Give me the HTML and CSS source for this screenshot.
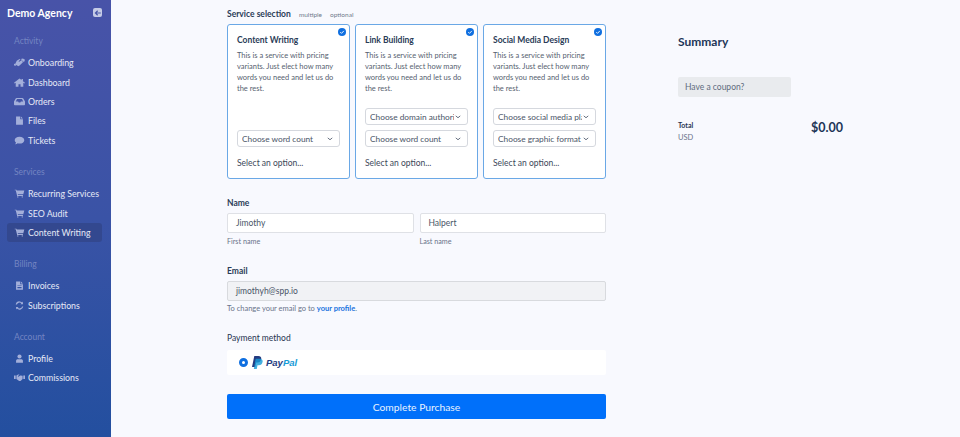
FILE: index.html
```html
<!DOCTYPE html>
<html lang="en">
  <head>
    <meta charset="UTF-8" />
    <title>Checkout</title>
    <link rel="stylesheet" href="styles.css">
  </head>
  <body>
    <aside class="sidebar">
      <div class="brand">
        <span>Demo Agency</span>
        <span class="collapse">
          <svg viewBox="0 0 10 10" width="8" height="8"><path d="M8.5 5H2M4.6 2.2 1.8 5l2.8 2.8" fill="none" stroke="#4a58a8" stroke-width="1.5"/></svg>
        </span>
      </div>

      <div class="nav-title">Activity</div>
      <a class="nav-item"><svg class="icon" viewBox="0 0 16 12"><path d="M0 7.500 3 9.500 1.800 11 0 10zM4 3.500 8 1l1.500.5L6.500 4l1 1 4-2.500 1.500 3-4.500 4.500-2 1.500-2-1-3-2zM10 1l3-1 3 2-1.500 3.500z"/></svg>Onboarding</a>
      <a class="nav-item"><svg class="icon" viewBox="0 0 16 12"><path d="M8 0 0 6.500l1 1 1.500-1.200V12h4V8.500h3V12h4V6.300L15 7.500l1-1-3-2.400V1h-2v1.500z"/></svg>Dashboard</a>
      <a class="nav-item"><svg class="icon" viewBox="0 0 16 12"><path fill-rule="evenodd" d="M4 1h8c1 0 1.500.5 2 1.200L16 6v4c0 1-.7 1.500-1.500 1.500h-13C.7 11.500 0 11 0 10V6l2-3.800C2.500 1.500 3 1 4 1zm.4 1.500L2.600 6H6l.8 1.500h2.400L10 6h3.400l-1.800-3.500z"/></svg>Orders</a>
      <a class="nav-item"><svg class="icon" viewBox="0 0 16 12"><path d="M3 0h6v4h4v8H3zM10 0l3 3h-3z"/></svg>Files</a>
      <a class="nav-item"><svg class="icon" viewBox="0 0 16 12"><path d="M8 .5c4 0 7 2.300 7 5s-3 5-7 5c-1 0-1.800-.1-2.600-.4C4.400 11 3 11.600 1.500 11.500c.8-.8 1.300-1.700 1.400-2.600C1.700 8 1 6.800 1 5.500c0-2.700 3-5 7-5z"/></svg>Tickets</a>

      <div class="nav-title nav-title-next">Services</div>
      <a class="nav-item"><svg class="icon" viewBox="0 0 16 12"><use href="#cart"/></svg>Recurring Services</a>
      <a class="nav-item"><svg class="icon" viewBox="0 0 16 12"><use href="#cart"/></svg>SEO Audit</a>
      <a class="nav-item nav-item-active"><svg class="icon" viewBox="0 0 16 12"><use href="#cart"/></svg>Content Writing</a>

      <div class="nav-title nav-title-next">Billing</div>
      <a class="nav-item"><svg class="icon" viewBox="0 0 16 12"><path fill-rule="evenodd" d="M3 0h6v4h4v8H3zM10 0l3 3h-3zM5 5.500v1h6v-1zM5 8v2h6V8z"/></svg>Invoices</a>
      <a class="nav-item"><svg class="icon" viewBox="0 0 16 12"><path d="M8 0c1.500 0 2.800.6 3.800 1.500L13 .3V4H9.300l1.300-1.300A4 4 0 0 0 4.200 4.500H2.500A5.600 5.600 0 0 1 8 0zM13.500 7.500A5.600 5.600 0 0 1 4.200 10.500L3 11.700V8h3.700L5.400 9.300a4 4 0 0 0 6.400-1.800z"/></svg>Subscriptions</a>

      <div class="nav-title nav-title-next">Account</div>
      <a class="nav-item"><svg class="icon" viewBox="0 0 16 12"><circle cx="8" cy="3" r="3"/><path d="M3 12V9.500C3 8 4 7 5.500 7h5C12 7 13 8 13 9.500V12z"/></svg>Profile</a>
      <a class="nav-item"><svg class="icon" viewBox="0 0 16 12"><path d="M0 3h2.500v5H0zM13.500 3H16v5h-2.500zM3.500 3 6 1.500h2L5.500 4l1 1L9 3l3.500.5V8L9.500 11H7.500L3.500 8z"/></svg>Commissions</a>

      <svg class="defs" width="0" height="0">
        <symbol id="cart" viewBox="0 0 16 12"><path d="M1 0h2.500l.4 1.500H15l-1.500 5.500H5.500l.3 1.200H13v1.300H4.600L2.500 1.300H1z"/><circle cx="5.500" cy="11" r="1"/><circle cx="12" cy="11" r="1"/></symbol>
      </svg>
    </aside>

    <main class="content">
      <form class="checkout">
        <div class="field-label service-label">
          Service selection <small>multiple</small> <small>optional</small>
        </div>
        <div class="services">
          <div class="service">
            <svg class="check" viewBox="0 0 10 10"><circle cx="5" cy="5" r="5" fill="#0f6fe0"/><path d="M2.800 5.100 4.400 6.700 7.300 3.600" fill="none" stroke="#fff" stroke-width="1.100"/></svg>
            <h3>Content Writing</h3>
            <p>This is a service with pricing variants. Just elect how many words you need and let us do the rest.</p>
            <div class="select"><span>Choose word count</span><svg viewBox="0 0 8 5"><path d="M1 1l3 2.500L7 1" fill="none" stroke="#4a5568" stroke-width="1.100"/></svg></div>
            <div class="price">Select an option...</div>
          </div>
          <div class="service">
            <svg class="check" viewBox="0 0 10 10"><circle cx="5" cy="5" r="5" fill="#0f6fe0"/><path d="M2.800 5.100 4.400 6.700 7.300 3.600" fill="none" stroke="#fff" stroke-width="1.100"/></svg>
            <h3>Link Building</h3>
            <p>This is a service with pricing variants. Just elect how many words you need and let us do the rest.</p>
            <div class="select"><span>Choose domain authority</span><svg viewBox="0 0 8 5"><path d="M1 1l3 2.500L7 1" fill="none" stroke="#4a5568" stroke-width="1.100"/></svg></div>
            <div class="select"><span>Choose word count</span><svg viewBox="0 0 8 5"><path d="M1 1l3 2.500L7 1" fill="none" stroke="#4a5568" stroke-width="1.100"/></svg></div>
            <div class="price">Select an option...</div>
          </div>
          <div class="service">
            <svg class="check" viewBox="0 0 10 10"><circle cx="5" cy="5" r="5" fill="#0f6fe0"/><path d="M2.800 5.100 4.400 6.700 7.300 3.600" fill="none" stroke="#fff" stroke-width="1.100"/></svg>
            <h3>Social Media Design</h3>
            <p>This is a service with pricing variants. Just elect how many words you need and let us do the rest.</p>
            <div class="select"><span>Choose social media platform</span><svg viewBox="0 0 8 5"><path d="M1 1l3 2.500L7 1" fill="none" stroke="#4a5568" stroke-width="1.100"/></svg></div>
            <div class="select"><span>Choose graphic format</span><svg viewBox="0 0 8 5"><path d="M1 1l3 2.500L7 1" fill="none" stroke="#4a5568" stroke-width="1.100"/></svg></div>
            <div class="price">Select an option...</div>
          </div>
        </div>

        <div class="field-label name-label">Name</div>
        <div class="name-row">
          <div class="name-col">
            <div class="input">Jimothy</div>
            <div class="hint">First name</div>
          </div>
          <div class="name-col">
            <div class="input">Halpert</div>
            <div class="hint">Last name</div>
          </div>
        </div>

        <div class="field-label email-label">Email</div>
        <div class="input input-disabled">jimothyh@spp.io</div>
        <div class="hint hint-email">To change your email go to <a class="link">your profile</a>.</div>

        <div class="field-label payment-label">Payment method</div>
        <div class="payment">
          <span class="radio"></span>
          <svg class="pp-mark" viewBox="0 0 12 14" width="11" height="13"><path d="M2.500 0H7c2.500 0 3.500 1.500 3 3.500C9.500 6 8 7 6 7H4.500L3.500 12H0z" fill="#253b80"/><path d="M4 3h4.500c2.500 0 3.500 1.500 3 3.500C11 9 9.500 10 7.500 10H6l-.8 4H2z" fill="#179bd7" opacity=".8"/></svg>
          <span class="pp-word"><b>Pay</b><i>Pal</i></span>
        </div>

        <button class="submit" type="button">Complete Purchase</button>
      </form>

      <section class="summary">
        <h2>Summary</h2>
        <div class="coupon">Have a coupon?</div>
        <div class="total">
          <div>
            <div class="total-label">Total</div>
            <div class="total-currency">USD</div>
          </div>
          <div class="total-amount">$0.00</div>
        </div>
      </section>
    </main>
  </body>
</html>
```

FILE: styles.css
```css
html,
body {
  height: 100%;
}
body {
  margin: 0;
  height: 437px;
  overflow: hidden;
  display: flex;
  font-family: "Lato", "Open Sans", sans-serif;
  background-color: #f8f9fe;
  color: #1f3350;
}
.sidebar {
  width: 111px;
  flex-shrink: 0;
  box-sizing: border-box;
  padding: 6px 9px 0 7px;
  background: linear-gradient(180deg, #4853a8 0%, #3a53a6 50%, #234f9f 100%);
  color: #fff;
}
.brand {
  display: flex;
  justify-content: space-between;
  align-items: center;
  font-size: 10.500px;
  font-weight: 700;
  height: 13px;
}
.collapse {
  width: 9px;
  height: 9px;
  background-color: #c5cbe6;
  border-radius: 2px;
  display: flex;
  align-items: center;
  justify-content: center;
}
.nav-title {
  font-size: 8.500px;
  color: #7485c2;
  margin: 16px 0 6px 7px;
  height: 12px;
  line-height: 12px;
}
.nav-title-next {
  margin-top: 16px;
}
.nav-item {
  display: flex;
  align-items: center;
  height: 19.400px;
  font-size: 8.800px;
  color: #e6e9f6;
  padding-left: 7px;
  border-radius: 3px;
}
.nav-item-active {
  background-color: #33488f;
  margin-top: 0;
}
.icon {
  width: 11px;
  height: 9px;
  margin-right: 3px;
  fill: #a3afda;
  flex-shrink: 0;
}
.defs {
  position: absolute;
}
.content {
  flex: 1;
  display: flex;
  padding-left: 116px;
}
.checkout {
  width: 379px;
  flex-shrink: 0;
  padding-top: 8px;
}
.field-label {
  font-size: 8.500px;
  font-weight: 700;
  color: #2a3c57;
  line-height: 12px;
}
.field-label small {
  font-size: 6.500px;
  font-weight: 400;
  color: #6f7a8c;
  margin-left: 6px;
}
.service-label {
  margin-bottom: 3px;
}
.services {
  display: flex;
  gap: 5px;
}
.service {
  position: relative;
  width: 123px;
  height: 155px;
  box-sizing: border-box;
  padding: 9px 9px 0;
  display: flex;
  flex-direction: column;
  background-color: #fff;
  border: 1px solid #6aa8e6;
  border-radius: 3px;
}
.service h3 {
  margin: 0;
  font-size: 8.500px;
  line-height: 12px;
  color: #2a3c57;
}
.service p {
  flex: 1;
  margin: 4px 0 0;
  font-size: 7.500px;
  line-height: 11px;
  color: #565f70;
}
.check {
  position: absolute;
  top: 3px;
  right: 3px;
  width: 8px;
  height: 8px;
}
.select {
  display: flex;
  align-items: center;
  gap: 1px;
  height: 17px;
  box-sizing: border-box;
  padding: 0 6px 0 4px;
  margin-top: 5px;
  border: 1px solid #d5d8de;
  border-radius: 3px;
  font-size: 8.300px;
  color: #4a5568;
}
.select span {
  flex: 1;
  overflow: hidden;
  white-space: nowrap;
}
.select svg {
  width: 6px;
  height: 4px;
  flex-shrink: 0;
}
.price {
  font-size: 8.500px;
  color: #3c4759;
  line-height: 12px;
  margin-top: 10px;
  margin-bottom: 9px;
}
.name-label {
  margin-top: 18px;
  margin-bottom: 4px;
}
.name-row {
  display: flex;
  gap: 6px;
}
.name-col {
  flex: 1;
}
.input {
  height: 20px;
  box-sizing: border-box;
  padding-left: 8px;
  display: flex;
  align-items: center;
  background-color: #fff;
  border: 1px solid #dfe1e6;
  border-radius: 2px;
  font-size: 8.500px;
  color: #4a5568;
}
.input-disabled {
  background-color: #f1f2f5;
  border-color: #d8dade;
}
.hint {
  font-size: 7.200px;
  line-height: 10px;
  color: #69738a;
  margin-top: 4px;
}
.hint-email {
  margin-top: 3px;
  font-size: 7.500px;
}
.link {
  color: #1873e0;
  font-weight: 700;
}
.email-label {
  margin-top: 18px;
  margin-bottom: 4px;
}
.payment-label {
  margin-top: 18px;
  margin-bottom: 6px;
  font-weight: 400;
  color: #1f3350;
}
.payment {
  height: 25px;
  display: flex;
  align-items: center;
  padding-left: 12px;
  background-color: #fff;
  border-radius: 2px;
}
.radio {
  width: 3px;
  height: 3px;
  border: 3.500px solid #0f6fe0;
  border-radius: 50%;
  background-color: #fff;
  margin-right: 4px;
}
.pp-mark {
  margin-right: 3px;
}
.pp-word {
  font-family: "Liberation Sans", sans-serif;
  font-size: 9.500px;
  font-weight: 700;
  font-style: italic;
}
.pp-word b {
  color: #253b80;
}
.pp-word i {
  color: #179bd7;
}
.submit {
  display: block;
  width: 100%;
  height: 25px;
  margin-top: 19px;
  border: none;
  border-radius: 2px;
  background-color: #0070fa;
  color: #e8f2ff;
  font-family: inherit;
  font-size: 10.300px;
}
.summary {
  width: 165px;
  margin-left: 72px;
  padding-top: 34px;
}
.summary h2 {
  margin: 0;
  font-size: 12px;
  line-height: 16px;
  color: #1d3557;
}
.coupon {
  width: 113px;
  height: 20px;
  box-sizing: border-box;
  margin-top: 27px;
  padding-left: 7px;
  display: flex;
  align-items: center;
  background-color: #e9ebee;
  border-radius: 2px;
  font-size: 8.500px;
  color: #5f6b7e;
}
.total {
  display: flex;
  justify-content: space-between;
  margin-top: 23px;
}
.total-label {
  font-size: 7px;
  font-weight: 700;
  line-height: 10px;
  color: #1f3350;
}
.total-currency {
  font-size: 7.500px;
  line-height: 10px;
  margin-top: 3px;
  color: #69738a;
}
.total-amount {
  font-size: 12.500px;
  font-weight: 700;
  line-height: 14px;
  margin-top: 1px;
  color: #1d3557;
}
```
